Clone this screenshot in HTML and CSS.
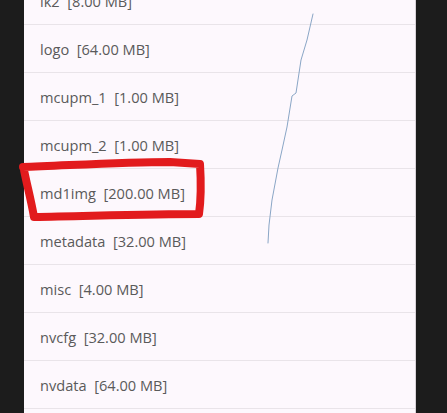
FILE: index.html
```html
<!DOCTYPE html>
<html>
<head>
<meta charset="utf-8">
<link rel="stylesheet" href="styles.css">
</head>
<body>
<div class="screen">
  <div class="edge edge-left"></div>
  <div class="panel">
    <ul class="list">
      <li class="row">lk2&nbsp;&nbsp;[8.00 MB]</li>
      <li class="row">logo&nbsp;&nbsp;[64.00 MB]</li>
      <li class="row">mcupm_1&nbsp;&nbsp;[1.00 MB]</li>
      <li class="row">mcupm_2&nbsp;&nbsp;[1.00 MB]</li>
      <li class="row">md1img&nbsp;&nbsp;[200.00 MB]</li>
      <li class="row">metadata&nbsp;&nbsp;[32.00 MB]</li>
      <li class="row">misc&nbsp;&nbsp;[4.00 MB]</li>
      <li class="row">nvcfg&nbsp;&nbsp;[32.00 MB]</li>
      <li class="row">nvdata&nbsp;&nbsp;[64.00 MB]</li>
      <li class="row"></li>
    </ul>
  </div>
  <div class="edge edge-right"></div>
  <svg class="marks" width="447" height="413" viewBox="0 0 447 413">
    <path class="mark-red" d="M23 167 C 60 166, 120 162, 170 162 L 200 164 C 201 180, 201 200, 199 214 C 150 214, 90 216, 34 217 C 31 200, 27 185, 24 170"/>
    <path class="mark-blue" d="M313 14 L307 40 L301 60 L296 93 L292 96 L287 127 L282 150 L278 168 L272 200 L269 225 L268 243"/>
  </svg>
</div>
</body>
</html>
```
FILE: styles.css
```css
html, body {
  margin: 0;
  padding: 0;
  background: #1c1c1c;
}
.screen {
  position: relative;
  display: flex;
  width: 447px;
  height: 413px;
  overflow: hidden;
}
.edge {
  background: #1c1c1c;
}
.edge-left {
  width: 24px;
  flex: none;
}
.edge-right {
  flex: 1;
}
.panel {
  width: 392px;
  flex: none;
  background: #fdf8fd;
  overflow: hidden;
  border-right: 1px solid #d8d2d8;
  box-sizing: border-box;
}
.list {
  list-style: none;
  margin: -23px 0 0 0;
  padding: 0;
}
.row {
  height: 47px;
  border-bottom: 1px solid #e9e4e9;
  display: flex;
  align-items: center;
  padding-left: 16px;
  font-family: "Open Sans", Roboto, sans-serif;
  font-size: 14.6px;
  color: #5a5a5a;
  white-space: nowrap;
}
.marks {
  position: absolute;
  left: 0;
  top: 0;
  pointer-events: none;
}
.mark-red {
  fill: none;
  stroke: #e21b1d;
  stroke-width: 8;
  stroke-linecap: round;
  stroke-linejoin: round;
}
.mark-blue {
  fill: none;
  stroke: #8aa6c6;
  stroke-width: 1;
  stroke-linecap: round;
  stroke-linejoin: round;
}
```
